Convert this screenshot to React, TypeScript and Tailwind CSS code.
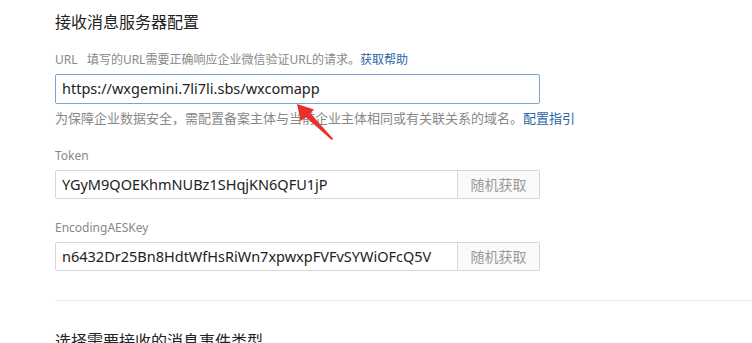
export default function App() {
  const font = { fontFamily: '"Noto Sans", "Noto Sans CJK SC", sans-serif' };
  return (
    <div
      className="relative h-[343px] w-[752px] overflow-hidden bg-white pl-[55px] pt-[11px] text-[#333]"
      style={font}
    >
      {/* section title */}
      <h2 className="text-[16px] leading-[22px] text-[#222]">接收消息服务器配置</h2>

      {/* URL */}
      <div className="mt-[18px] text-[12px] leading-[18px] text-[#888]">
        URL&nbsp;&nbsp;&nbsp;填写的URL需要正确响应企业微信验证URL的请求。
        <span className="text-[#2a65a8]">获取帮助</span>
      </div>
      <div className="mt-[5px] flex h-[30px] w-[485px] items-center rounded-[2px] border border-[#7ea3cf] px-[6px] text-[14.5px] text-[#222]">
        https://wxgemini.7li7li.sbs/wxcomapp
      </div>
      <div className="mt-[5px] text-[13px] leading-[18px] text-[#888]">
        为保障企业数据安全，需配置备案主体与当前企业主体相同或有关联关系的域名。
        <span className="text-[#2a65a8]">配置指引</span>
      </div>

      {/* Token */}
      <div className="mt-[20px] text-[12px] leading-[18px] text-[#888]">Token</div>
      <div className="mt-[5px] flex h-[29px] w-[485px]">
        <div className="flex flex-1 items-center rounded-l-[2px] border border-[#d6d6d6] px-[6px] text-[14.5px] text-[#222]">
          YGyM9QOEKhmNUBz1SHqjKN6QFU1jP
        </div>
        <button className="w-[82px] rounded-r-[2px] border border-l-0 border-[#d6d6d6] bg-[#fafafa] text-[14px] text-[#999]">
          随机获取
        </button>
      </div>

      {/* EncodingAESKey */}
      <div className="mt-[20px] text-[12px] leading-[18px] text-[#888]">EncodingAESKey</div>
      <div className="mt-[5px] flex h-[29px] w-[485px]">
        <div className="flex flex-1 items-center rounded-l-[2px] border border-[#d6d6d6] px-[6px] text-[14.5px] text-[#222]">
          n6432Dr25Bn8HdtWfHsRiWn7xpwxpFVFvSYWiOFcQ5V
        </div>
        <button className="w-[82px] rounded-r-[2px] border border-l-0 border-[#d6d6d6] bg-[#fafafa] text-[14px] text-[#999]">
          随机获取
        </button>
      </div>

      <div className="mt-[29px] h-px bg-[#e8e8e8]" />

      <h2 className="mt-[29px] text-[16px] leading-[22px] text-[#222]">选择需要接收的消息事件类型</h2>

      {/* red annotation arrow */}
      <svg className="pointer-events-none absolute left-0 top-0" width="752" height="343">
        <polygon
          points="297,104 314,109.6 310.4,113.2 333.1,138.7 331.7,140.1 306.2,117.4 300.6,121"
          fill="#e8302c"
        />
      </svg>
    </div>
  );
}
